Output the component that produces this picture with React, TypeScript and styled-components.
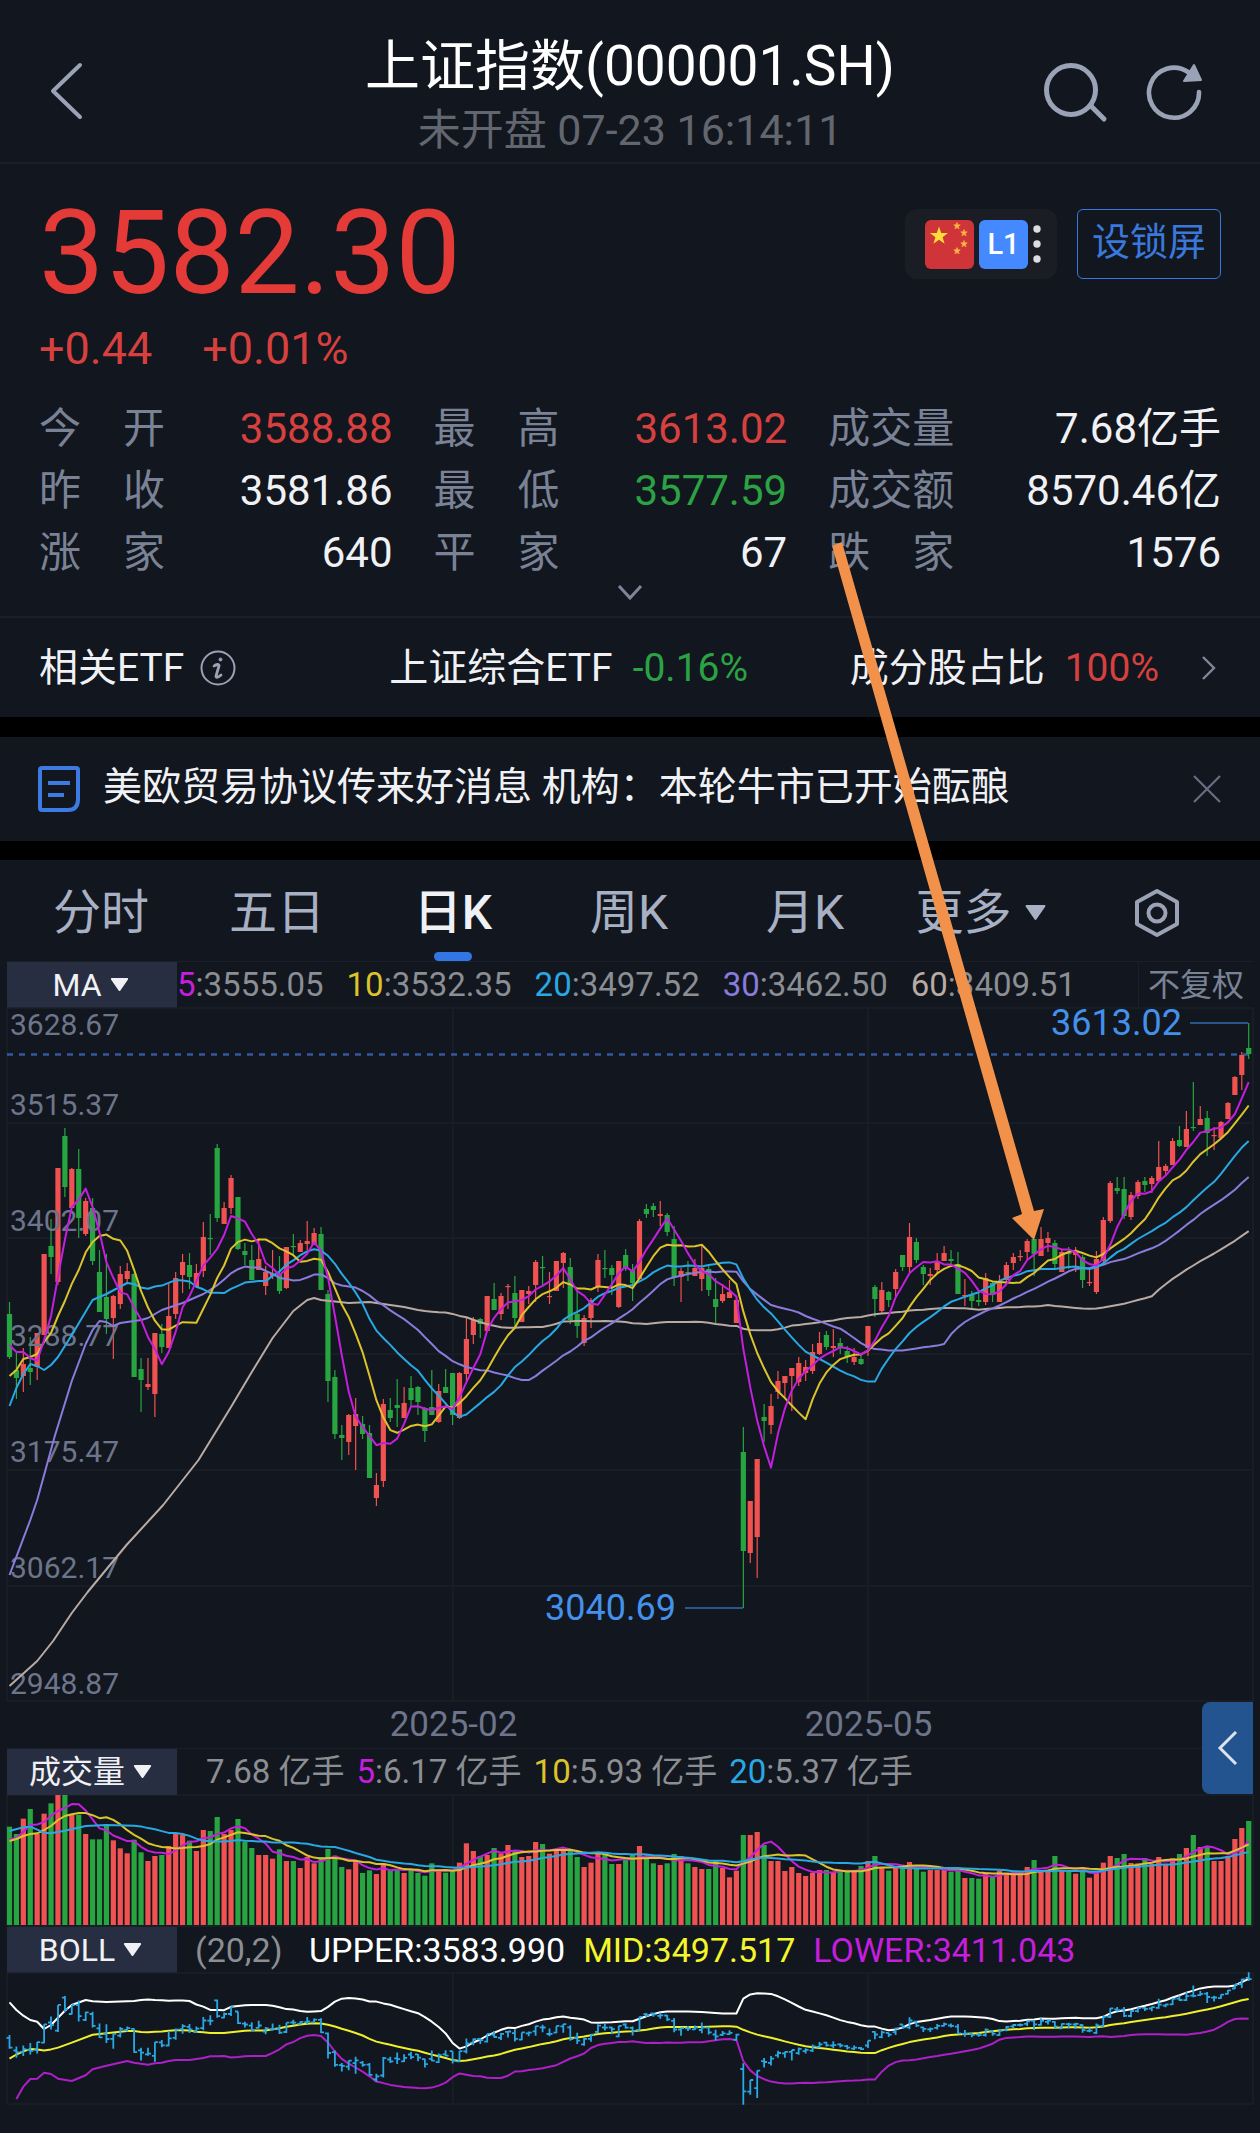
import React from "react";
import styled, { createGlobalStyle } from "styled-components";

const color = {
  bg: "#12161e",
  line: "#1a1f29",
  text: "#f0f1f5",
  label: "#7a8296",
  muted: "#62666f",
  axis: "#6d758b",
  value: "#8b8e93",
  tab: "#a8b0c4",
  icon: "#9aa2b6",
  red: "#e43a38",
  softRed: "#d6403f",
  green: "#2ba344",
  up: "#ef5250",
  down: "#27a541",
  blue: "#3a78dc",
  ma5: "#c31fdc",
  ma10: "#dcc32c",
  ma20: "#28a8e4",
  ma30: "#8a7bdc",
  ma60: "#b9aaa4",
};

/* ---------- chart data ---------- */

// One session per entry: direction, then high, body top, body bottom, low.
const SESSIONS = `
g302,314,357,359 g353,370,378,399 r348,364,376,392 g337,368,372,385 r333,333,367,380 r254,254,335,335
g219,246,257,274 r168,168,282,285 g128,136,187,197 r168,169,208,208 g149,169,218,238 r198,201,234,236
g198,208,261,265 g250,272,312,312 g254,297,319,334 r295,296,318,359 r266,274,304,309 r263,271,279,283
g273,274,377,377 g358,369,380,412 r358,384,387,390 r333,333,394,417 g324,334,347,353 r284,316,348,348
r272,278,314,319 r254,262,275,293 g253,265,277,289 r264,273,287,288 r222,237,271,277 g214,238,239,255
g144,148,218,222 r202,208,224,224 r175,178,208,214 g197,197,249,250 g243,251,255,265 g245,260,280,280
r238,259,270,270 r266,272,286,295 r250,274,276,279 g256,274,291,294 r247,247,288,289 g234,246,247,255
r240,243,252,252 r221,241,244,250 r228,233,245,245 g227,234,290,290 g290,294,381,402 g370,377,434,439
g425,435,438,460 r414,415,442,455 r398,414,426,470 g416,424,434,439 g425,433,478,478 r473,485,498,506
r399,404,481,487 g398,410,418,422 g379,405,408,427 r387,403,418,418 g376,388,400,406 g386,387,402,415
g407,408,431,442 g370,407,415,415 r384,391,422,423 g369,387,393,393 g373,373,415,425 r372,373,418,419
r317,339,374,381 r317,320,335,344 g318,319,324,338 r296,296,331,331 g283,299,310,310 r293,296,314,320
r284,286,287,309 g276,293,318,327 r290,290,322,322 r286,291,294,304 r260,262,285,302 g256,267,268,286
r272,296,297,304 r261,261,291,291 r252,253,263,288 g258,267,320,324 g291,314,326,338 r315,318,343,346
r298,300,318,328 r254,260,287,292 g250,268,269,278 g265,268,275,295 r261,261,307,308 g249,255,269,271
g264,270,283,301 r219,221,279,279 g204,209,214,218 g203,206,210,217 r201,214,216,226 g213,215,232,236
g226,239,277,286 r268,271,277,302 g261,272,273,281 r259,268,276,276 r246,268,279,291 g266,269,290,296
g278,299,307,323 r284,294,301,303 r280,292,298,298 r296,300,323,323 g427,452,551,608 r501,501,553,563
r459,459,537,578 g404,417,421,442 r394,406,425,434 r371,381,392,399 r376,376,383,399 r368,368,376,411
r357,363,382,386 r360,367,373,381 r344,352,371,374 r332,343,354,355 g331,335,347,350 r329,346,348,357
g338,343,348,354 g346,351,357,363 r348,357,362,365 g355,359,364,365 r326,326,348,356 g285,287,299,317
r282,290,311,313 g291,292,300,307 r269,272,289,298 g255,255,267,271 r223,237,267,273 g238,242,260,263
g265,267,274,285 r268,274,276,285 r253,261,270,274 r246,253,261,261 g250,259,261,265 g252,264,294,294
r279,295,296,306 g291,295,301,308 g291,300,302,306 r273,278,302,305 g281,283,295,302 r275,281,302,302
r262,265,280,282 r253,257,263,270 r250,256,257,261 r239,241,252,259 g239,239,254,276 r227,239,256,256
r232,238,243,252 g240,243,264,270 r250,252,272,272 g247,253,254,269 r247,252,255,272 g255,257,280,288
r268,282,283,286 r251,259,292,294 r217,220,261,263 r181,183,221,223 g177,188,191,194 g177,189,216,219
r192,195,217,220 r180,182,196,199 g177,181,185,192 r176,178,184,193 r141,167,181,182 r164,166,171,175
r138,141,165,165 g126,140,146,147 r111,129,147,147 g82,127,128,131 r106,119,125,125 g111,118,133,156
r127,135,136,150 r121,122,138,138 r102,103,119,119 r76,77,95,95 r52,55,75,90 g23,48,54,59
`;

interface Session {
  up: boolean;
  high: number;
  top: number;
  bottom: number;
  low: number;
  open: number;
  close: number;
}

const sessions: Session[] = SESSIONS.trim()
  .split(/\s+/)
  .map((entry) => {
    const up = entry[0] === "r";
    const [high, top, bottom, low] = entry.slice(1).split(",").map(Number);
    return { up, high, top, bottom, low, open: up ? bottom : top, close: up ? top : bottom };
  });

// Volume of each session, in thirds of a chart unit below the panel's ceiling.
const VOLUMES = [
  320, 342, 296, 267, 342, 281, 250, 225, 222, 284, 284, 342, 358, 358, 313, 361, 385, 400, 359, 397,
  423, 408, 405, 378, 342, 345, 362, 393, 330, 333, 291, 342, 330, 297, 365, 384, 405, 405, 416, 388,
  423, 423, 444, 411, 430, 411, 387, 407, 441, 448, 423, 459, 451, 462, 430, 452, 448, 459, 450, 459,
  467, 430, 450, 458, 450, 428, 370, 393, 408, 405, 384, 400, 375, 393, 411, 408, 366, 372, 401, 390,
  385, 393, 411, 441, 428, 400, 405, 432, 432, 417, 405, 378, 408, 430, 435, 430, 402, 408, 430, 441,
  447, 447, 423, 444, 472, 452, 345, 345, 336, 375, 423, 423, 453, 441, 459, 468, 459, 450, 450, 458,
  453, 450, 452, 438, 423, 408, 441, 452, 441, 441, 426, 441, 455, 450, 450, 445, 455, 452, 474, 474,
  476, 458, 468, 452, 458, 460, 455, 441, 420, 450, 450, 408, 452, 455, 461, 450, 473, 455, 428, 408,
  414, 402, 429, 430, 414, 432, 411, 434, 415, 402, 384, 345, 381, 381, 423, 423, 408, 357, 324, 303,
].map((v) => (v - 222) / 3);

type Knot = [number, number];

const xAt = (i: number) => 9.5 + i * 6.923;

const average = (values: number[]) => values.reduce((a, b) => a + b, 0) / values.length;

const trailing = (values: number[], i: number, period: number) => values.slice(i - period + 1, i + 1);

// The window has no history before its first session, so each average opens
// with known knots and is computed from the first full period onwards.
function series(values: number[], period: number, head: Knot[], fn = average): Knot[] {
  const tail: Knot[] = [];
  for (let i = period - 1; i < values.length; i++) tail.push([i, fn(trailing(values, i, period))]);
  return [...head, ...tail];
}

const toPoints = (knots: Knot[], scale: (y: number) => number = (y) => y) =>
  knots.map(([i, y]) => `${xAt(i).toFixed(1)},${scale(y).toFixed(1)}`).join(" ");

const closes = sessions.map((s) => s.close);

const ma5 = series(closes, 5, [[0, 345], [1, 352], [2, 352], [3, 358]]);
const ma10 = series(closes, 10, [
  [0, 376], [1, 370], [2, 359], [3, 357], [4, 354], [5, 342], [6, 333], [7, 316], [8, 301],
]);
const ma20 = series(closes, 20, [
  [0, 406], [1, 388], [2, 374], [3, 364], [4, 366], [5, 370], [6, 365], [7, 357], [9, 335], [12, 300],
  [14, 294], [17, 283], [18, 284],
]);
const ma30 = series(closes, 30, [
  [0, 575], [3, 520], [4, 500], [5, 475], [6.5, 437], [9, 381], [11, 344], [12, 330], [13, 321], [14, 322],
  [15, 326], [16, 323], [19, 320], [20, 318], [22, 310], [25, 303], [28, 294],
]);
const ma60 = series(closes, 60, [
  [0, 686], [4, 661], [6.3, 641], [9, 613], [11.3, 592], [16.9, 545], [22.2, 505], [27.3, 460], [32, 407],
  [35, 372], [38, 338], [41, 311], [43, 300], [44, 298], [45, 300], [49, 303], [52, 302], [54, 304], [57, 307],
]);

const third = (knots: Knot[]): Knot[] => knots.map(([i, v]) => [i, (v - 222) / 3]);
const vol5 = series(VOLUMES, 5, third([[0, 357], [1, 355], [2, 335], [3, 315]]));
const vol10 = series(VOLUMES, 10, third([
  [0, 363], [1, 357], [2, 348], [3, 342], [4, 340], [5, 330], [6, 318], [7, 300], [8, 288],
]));
const vol20 = series(VOLUMES, 20, third([
  [0, 333], [2, 322], [3, 320], [5, 338], [6, 340], [8, 332], [11, 318], [14, 315], [18, 317],
]));

// Bollinger panel: the same prices on a flatter scale.
const bollY = (y: number) => 27 + (y - 141.7) * 0.2255;
const deviation = (values: number[]) => {
  const m = average(values);
  return Math.sqrt(average(values.map((v) => (v - m) ** 2)));
};
const panel = (knots: Knot[]): Knot[] => knots.map(([i, v]) => [i, v / 3 - 252]);
const upperBand = [
  ...panel([
    [0, 847], [1, 870], [2, 887], [3, 900], [4, 905], [5, 927], [6, 915], [7, 893], [8, 872], [9, 855],
    [11, 840], [12, 844], [14, 846], [18, 843],
  ]),
  ...series(closes, 20, [], (w) => bollY(average(w) - 2 * deviation(w))),
];
const lowerBand = [
  ...panel([
    [1, 1137], [2, 1100], [3, 1077], [4, 1076], [5, 1058], [6, 1062], [7, 1076], [9, 1083], [11, 1066],
    [12, 1048], [14, 1037], [17, 1023], [18, 1028],
  ]),
  ...series(closes, 20, [], (w) => bollY(average(w) + 2 * deviation(w))),
];

/* ---------- page frame ---------- */

const GlobalStyle = createGlobalStyle`
  *, *::before, *::after { box-sizing: border-box; }
  body {
    margin: 0;
    background: ${color.bg};
    color: ${color.text};
    font-family: Roboto, "Noto Sans CJK SC", sans-serif;
  }
  h1, p, dl, dt, dd { margin: 0; font-weight: 400; }
  button, select {
    font: inherit;
    color: inherit;
    background: none;
    border: 0;
    padding: 0;
    cursor: pointer;
  }
  a { color: inherit; text-decoration: none; }
  svg { display: block; }
`;

const Page = styled.main`
  position: relative;
  min-height: 100vh;
  background: ${color.bg};
`;

const Header = styled.header`
  display: grid;
  grid-template-columns: 1fr auto 1fr;
  align-items: center;
  height: 164px;
  padding: 24px 44px 0;
  border-bottom: 2px solid ${color.line};
`;

const HeaderTitles = styled.div`
  display: flex;
  flex-direction: column;
  align-items: center;
  padding-top: 10px;
`;

const Title = styled.h1`
  font-size: 55px;
  line-height: 64px;
  color: #fff;
`;

const Subtitle = styled.p`
  font-size: 43px;
  line-height: 64px;
  color: ${color.muted};
`;

const HeaderActions = styled.div`
  display: flex;
  justify-content: flex-end;
  gap: 36px;
  padding-right: 12px;
`;

const IconButton = styled.button`
  display: inline-flex;
  align-items: center;
  justify-content: center;
`;

const Quote = styled.section`
  padding: 45px 39px 0;
  border-bottom: 2px solid ${color.line};
`;

const QuoteTop = styled.div`
  display: flex;
  justify-content: space-between;
  align-items: flex-start;
`;

const Price = styled.p`
  font-size: 116px;
  line-height: 88px;
  color: ${color.red};
`;

const QuoteTools = styled.div`
  display: flex;
  align-items: center;
  gap: 20px;
`;

const MarketBadge = styled.button`
  display: flex;
  align-items: center;
  gap: 5px;
  height: 70px;
  padding: 0 16px 0 20px;
  border-radius: 12px;
  background: #1a1d24;
`;

const LevelTag = styled.span`
  width: 49px;
  height: 49px;
  border-radius: 6px;
  background: #4489ff;
  color: #fff;
  font-size: 29px;
  font-weight: 500;
  line-height: 49px;
  text-align: center;
`;

const LockButton = styled.button`
  height: 70px;
  padding: 0 14px 4px;
  border: 1px solid ${color.blue};
  border-radius: 6px;
  color: ${color.blue};
  font-size: 38px;
  line-height: 56px;
`;

const Change = styled.p`
  display: flex;
  gap: 50px;
  padding-top: 27px;
  font-size: 45px;
  line-height: 50px;
  color: ${color.softRed};
`;

const Stats = styled.dl`
  display: grid;
  grid-template-columns: 9fr 9fr 10fr;
  column-gap: 41px;
  padding-top: 24px;
`;

const Stat = styled.div`
  display: flex;
  justify-content: space-between;
  font-size: 42px;
  line-height: 62px;
`;

const StatName = styled.dt`
  display: flex;
  justify-content: space-between;
  width: 3em;
  color: ${color.label};
`;

const StatValue = styled.dd<{ $tone?: string }>`
  color: ${(p) => p.$tone ?? color.text};
`;

const Expand = styled(IconButton)`
  align-items: flex-start;
  width: 100%;
  height: 32px;
`;

const EtfRow = styled.section`
  display: grid;
  grid-template-columns: 350fr 460fr 369fr;
  align-items: center;
  height: 99px;
  padding: 0 41px 0 39px;
  font-size: 39px;
  line-height: 56px;
`;

const EtfCell = styled.a<{ $gap?: number }>`
  display: flex;
  align-items: center;
  gap: ${(p) => p.$gap ?? 20}px;
  white-space: nowrap;
`;

const Toned = styled.span<{ $tone: string }>`
  color: ${(p) => p.$tone};
`;

const PushRight = styled.span`
  margin-left: auto;
`;

const News = styled.section`
  display: flex;
  align-items: center;
  gap: 23px;
  height: 143px;
  padding: 0 39px 0 38px;
  border: solid #000;
  border-width: 20px 0 19px;
  font-size: 39px;
  line-height: 56px;
`;

const NewsLink = styled.a`
  flex: 1;
  padding-bottom: 4px;
  white-space: nowrap;
`;

/* ---------- chart frame ---------- */

const Tabs = styled.nav`
  display: grid;
  grid-template-columns: repeat(7, 1fr);
  height: 101px;
  padding: 0 15px 0 13px;
`;

const Tab = styled.button<{ $active?: boolean }>`
  display: flex;
  align-items: center;
  justify-content: center;
  gap: 12px;
  padding-top: 4px;
  font-size: 48px;
  line-height: 64px;
  font-weight: ${(p) => (p.$active ? 500 : 400)};
  color: ${(p) => (p.$active ? color.text : color.tab)};
  position: relative;

  &::after {
    content: "";
    display: ${(p) => (p.$active ? "block" : "none")};
    position: absolute;
    left: 50%;
    bottom: 0;
    width: 38px;
    height: 9px;
    margin-left: -19px;
    border-radius: 5px;
    background: #3276e4;
  }
`;

const IndicatorBar = styled.div<{ $gap: number; $indent: number; $size: number }>`
  display: flex;
  align-items: center;
  gap: ${(p) => p.$gap}px;
  height: 46px;
  margin: 0 7px;
  border-top: 1px solid ${color.line};
  font-size: ${(p) => p.$size}px;
  line-height: 46px;
  color: ${color.value};
  white-space: nowrap;

  & > :nth-child(2) {
    margin-left: ${(p) => p.$indent}px;
  }
`;

const Picker = styled.label<{ $gap: number }>`
  display: flex;
  align-items: center;
  justify-content: center;
  gap: 8px;
  width: 170px;
  height: 46px;
  padding-right: 3px;
  margin-right: -${(p) => p.$gap}px;
  background: #282e41;
  color: ${color.text};
`;

const PickerSelect = styled.select`
  appearance: none;
  field-sizing: content;
  height: 46px;
  font-size: 32px;
  line-height: 46px;
  outline: 0;
`;

const Adjust = styled.button`
  margin-left: auto;
  padding: 0 9px;
  height: 46px;
  border-left: 1px solid ${color.line};
  color: ${color.label};
  font-size: 32px;
  line-height: 44px;
`;

const Chart = styled.svg`
  width: 100%;
  height: auto;
  overflow: visible;
  font-family: Roboto, sans-serif;
`;

const AxisAndVolume = styled.div`
  position: relative;
`;

const DateAxis = styled.div`
  display: grid;
  grid-template-columns: 246fr 415fr 415fr 184fr;
  height: 46px;
  font-size: 35px;
  line-height: 46px;
  color: ${color.axis};
  text-align: center;

  & > :first-child {
    grid-column: 2;
  }
`;

const Drawer = styled(IconButton)`
  position: absolute;
  top: 0;
  right: 7px;
  width: 51px;
  height: 92px;
  border-radius: 8px 0 0 8px;
  background: #23548f;
`;

const Annotation = styled.svg`
  position: absolute;
  inset: 0;
  width: 100%;
  height: 100%;
  pointer-events: none;
`;

/* ---------- small drawings ---------- */

const Triangle = ({ w, h }: { w: number; h: number }) => (
  <svg width={w} height={h} viewBox="0 0 22 16" aria-hidden="true">
    <path d="M2 1H20L11 14Z" fill="currentColor" stroke="currentColor" strokeWidth="2" strokeLinejoin="round" />
  </svg>
);

const BackIcon = () => (
  <svg width="44" height="60" viewBox="0 0 44 60" fill="none" aria-hidden="true">
    <path d="M36 4 9 30 36 56" stroke={color.icon} strokeWidth="4" strokeLinecap="round" strokeLinejoin="round" />
  </svg>
);

const SearchIcon = () => (
  <svg width="66" height="66" viewBox="0 0 66 66" fill="none" stroke={color.icon} strokeWidth="5" aria-hidden="true">
    <circle cx="29" cy="30" r="24.5" />
    <path d="m49 46 13 13" strokeLinecap="round" />
  </svg>
);

const RefreshIcon = () => (
  <svg width="60" height="66" viewBox="0 0 60 66" fill="none" aria-hidden="true">
    <path d="M55 32A25 25 0 1 1 44 12" stroke={color.icon} strokeWidth="4.6" strokeLinecap="round" />
    <path d="M50 5 57 20 40 21Z" fill={color.icon} stroke={color.icon} strokeWidth="2" strokeLinejoin="round" />
  </svg>
);

const star = (cx: number, cy: number, r: number) =>
  Array.from({ length: 10 }, (_, k) => {
    const a = (Math.PI / 5) * k - Math.PI / 2;
    const d = k % 2 ? r * 0.4 : r;
    return `${(cx + d * Math.cos(a)).toFixed(1)},${(cy + d * Math.sin(a)).toFixed(1)}`;
  }).join(" ");

const Flag = () => (
  <svg width="49" height="49" viewBox="0 0 49 49" aria-hidden="true">
    <rect width="49" height="49" rx="6" fill="#ce3438" />
    <polygon points={star(14, 16, 9.5)} fill="#fbdc3a" />
    {[[32, 6], [39, 13], [39, 24], [32, 31]].map(([x, y]) => (
      <polygon key={`${x}-${y}`} points={star(x, y, 3.4)} fill="#fbc04a" stroke="#f5a43c" strokeWidth="1" />
    ))}
  </svg>
);

const Dots = () => (
  <svg width="8" height="40" viewBox="0 0 8 40" fill="#dcdde0" aria-hidden="true">
    <circle cx="4" cy="5" r="3.7" />
    <circle cx="4" cy="20" r="3.7" />
    <circle cx="4" cy="35" r="3.7" />
  </svg>
);

const InfoIcon = () => (
  <svg width="36" height="36" viewBox="0 0 36 36" fill="none" stroke={color.icon} aria-hidden="true">
    <circle cx="18" cy="18" r="16.5" strokeWidth="2" />
    <path d="M14 16C16 14.500 19.500 13.500 19 16L16 26C15.500 28.500 19 27 21 25" strokeWidth="2.800" strokeLinecap="round" />
    <circle cx="20.500" cy="9.500" r="1.500" fill={color.icon} />
  </svg>
);

const NewsIcon = () => (
  <svg width="42" height="46" viewBox="0 0 42 46" fill="none" stroke="#3d7be2" aria-hidden="true">
    <path d="M4 2H38Q40 2 40 4V33Q40 44 30 44H4Q2 44 2 42V4Q2 2 4 2Z" strokeWidth="4" strokeLinejoin="round" />
    <path d="M10 17H32M10 29H26" strokeWidth="4" />
  </svg>
);

const SettingsIcon = () => (
  <svg width="46" height="50" viewBox="0 0 46 50" fill="none" stroke={color.icon} strokeWidth="4" aria-hidden="true">
    <path d="M23 3 43 14V36L23 47 3 36V14Z" strokeLinejoin="round" />
    <circle cx="23" cy="25" r="8.500" />
  </svg>
);

/* ---------- chart panels ---------- */

const Line = ({ points, stroke }: { points: string; stroke: string }) => (
  <polyline points={points} fill="none" stroke={stroke} strokeWidth="2" strokeLinejoin="round" />
);

const Frame = ({ top, bottom }: { top: number; bottom: number }) => (
  <path
    d={`M7 ${top}H1253V${bottom}H7ZM453 ${top}V${bottom}M868 ${top}V${bottom}`}
    fill="none"
    stroke={color.line}
    strokeWidth="1.500"
  />
);

const PRICE_AXIS: [string, number][] = [
  ["3628.67", 35],
  ["3515.37", 115],
  ["3402.07", 231],
  ["3288.77", 346],
  ["3175.47", 462],
  ["3062.17", 578],
  ["2948.87", 694],
];

const CandleChart = () => (
  <Chart viewBox="0 7 1260 695" role="img" aria-label="日K线图">
    <Frame top={8} bottom={701} />
    <path d="M7 123H1253M7 238H1253M7 354H1253M7 470H1253M7 586H1253" stroke={color.line} strokeWidth="1.500" />
    <path d="M7 54.500H1253" stroke="#2f5b9e" strokeWidth="2.600" strokeDasharray="6 6" />
    {sessions.map((s, i) => (
      <g key={i} fill={s.up ? color.up : color.down}>
        <rect x={xAt(i) - 0.6} y={s.high} width="1.200" height={s.low - s.high} />
        <rect x={xAt(i) - 2.6} y={s.top} width="5.200" height={Math.max(1.2, s.bottom - s.top)} />
      </g>
    ))}
    <g fill={color.axis} fontSize="30">
      {PRICE_AXIS.map(([text, y]) => (
        <text key={text} x="10" y={y}>{text}</text>
      ))}
    </g>
    <Line points={toPoints(ma60)} stroke={color.ma60} />
    <Line points={toPoints(ma30)} stroke={color.ma30} />
    <Line points={toPoints(ma20)} stroke={color.ma20} />
    <Line points={toPoints(ma10)} stroke={color.ma10} />
    <Line points={toPoints(ma5)} stroke={color.ma5} />
    <path d="M1190 23H1248M685 608H743" stroke="#2f6cb0" strokeWidth="1.500" />
    <g fill="#4391ea" fontSize="36" textAnchor="end">
      <text x="1182" y="35">3613.02</text>
      <text x="676" y="620">3040.69</text>
    </g>
  </Chart>
);

const VolumeChart = () => (
  <Chart viewBox="0 0 1260 132" role="img" aria-label="成交量图">
    <Frame top={1} bottom={131} />
    {VOLUMES.map((y, i) => (
      <rect
        key={i}
        x={xAt(i) - 2.6}
        y={y}
        width="5.200"
        height={131 - y}
        fill={sessions[i].up ? color.up : color.down}
      />
    ))}
    <Line points={toPoints(vol5)} stroke={color.ma5} />
    <Line points={toPoints(vol10)} stroke={color.ma10} />
    <Line points={toPoints(vol20)} stroke={color.ma20} />
  </Chart>
);

const BollChart = () => (
  <Chart viewBox="0 0 1260 134" role="img" aria-label="BOLL图">
    <Frame top={1} bottom={132} />
    <Line points={toPoints(upperBand)} stroke="#ffffff" />
    <Line points={toPoints(ma20, bollY)} stroke="#eef02a" />
    <Line points={toPoints(lowerBand)} stroke="#ad20c8" />
    <path
      d={sessions
        .map((s, i) => {
          const x = xAt(i);
          const y = (v: number) => bollY(v).toFixed(1);
          return `M${x.toFixed(1)} ${y(s.high)}V${y(s.low + 3)}M${(x - 3).toFixed(1)} ${y(s.open)}h3M${x.toFixed(1)} ${y(s.close)}h3`;
        })
        .join("")}
      fill="none"
      stroke={color.ma20}
      strokeWidth="1.800"
    />
  </Chart>
);

/* ---------- content ---------- */

const STATS: { name: string; value: string; tone?: string }[] = [
  { name: "今开", value: "3588.88", tone: color.softRed },
  { name: "最高", value: "3613.02", tone: color.softRed },
  { name: "成交量", value: "7.68亿手" },
  { name: "昨收", value: "3581.86" },
  { name: "最低", value: "3577.59", tone: color.green },
  { name: "成交额", value: "8570.46亿" },
  { name: "涨家", value: "640" },
  { name: "平家", value: "67" },
  { name: "跌家", value: "1576" },
];

const AVERAGES = [
  { period: "5", value: "3555.05", tone: color.ma5 },
  { period: "10", value: "3532.35", tone: color.ma10 },
  { period: "20", value: "3497.52", tone: color.ma20 },
  { period: "30", value: "3462.50", tone: color.ma30 },
  { period: "60", value: "3409.51", tone: color.ma60 },
];

const VOLUME_AVERAGES = [
  { period: "5", value: "6.17 亿手", tone: color.ma5 },
  { period: "10", value: "5.93 亿手", tone: color.ma10 },
  { period: "20", value: "5.37 亿手", tone: color.ma20 },
];

const IndicatorPicker = ({ name, value, gap }: { name: string; value: string; gap: number }) => (
  <Picker $gap={gap}>
    <PickerSelect aria-label={name} defaultValue={value}>
      <option>{value}</option>
    </PickerSelect>
    <Triangle w={19} h={14} />
  </Picker>
);

export default function App() {
  return (
    <Page>
      <GlobalStyle />
      <Header>
        <div>
          <IconButton aria-label="返回"><BackIcon /></IconButton>
        </div>
        <HeaderTitles>
          <Title>上证指数(000001.SH)</Title>
          <Subtitle>未开盘 07-23 16:14:11</Subtitle>
        </HeaderTitles>
        <HeaderActions>
          <IconButton aria-label="搜索"><SearchIcon /></IconButton>
          <IconButton aria-label="刷新"><RefreshIcon /></IconButton>
        </HeaderActions>
      </Header>

      <Quote>
        <QuoteTop>
          <Price>3582.30</Price>
          <QuoteTools>
            <MarketBadge aria-label="行情等级">
              <Flag />
              <LevelTag>L1</LevelTag>
              <Dots />
            </MarketBadge>
            <LockButton>设锁屏</LockButton>
          </QuoteTools>
        </QuoteTop>
        <Change>
          <span>+0.44</span>
          <span>+0.01%</span>
        </Change>
        <Stats>
          {STATS.map((s) => (
            <Stat key={s.name}>
              <StatName>
                {[...s.name].map((ch) => (
                  <span key={ch}>{ch}</span>
                ))}
              </StatName>
              <StatValue $tone={s.tone}>{s.value}</StatValue>
            </Stat>
          ))}
        </Stats>
        <Expand aria-label="展开">
          <svg width="26" height="16" viewBox="0 0 26 16" fill="none" aria-hidden="true">
            <path d="M2 2 13 14 24 2" stroke="#7f8699" strokeWidth="3" />
          </svg>
        </Expand>
      </Quote>

      <EtfRow>
        <EtfCell href="#etf" $gap={16}>
          相关ETF
          <InfoIcon />
        </EtfCell>
        <EtfCell href="#composite">
          上证综合ETF
          <Toned $tone={color.green}>-0.16%</Toned>
        </EtfCell>
        <EtfCell href="#components">
          成分股占比
          <Toned $tone={color.softRed}>100%</Toned>
          <PushRight>
            <svg width="20" height="28" viewBox="0 0 20 28" fill="none" aria-hidden="true">
              <path d="M4 3 15 14 4 25" stroke="#7f8699" strokeWidth="2.400" />
            </svg>
          </PushRight>
        </EtfCell>
      </EtfRow>

      <News>
        <NewsIcon />
        <NewsLink href="#news">美欧贸易协议传来好消息 机构：本轮牛市已开始酝酿</NewsLink>
        <IconButton aria-label="关闭">
          <svg width="28" height="28" viewBox="0 0 28 28" fill="none" aria-hidden="true">
            <path d="M1 1 27 27M27 1 1 27" stroke="#676e84" strokeWidth="2.200" />
          </svg>
        </IconButton>
      </News>

      <Tabs aria-label="周期">
        <Tab>分时</Tab>
        <Tab>五日</Tab>
        <Tab $active aria-current="true">日K</Tab>
        <Tab>周K</Tab>
        <Tab>月K</Tab>
        <Tab aria-haspopup="menu">
          更多
          <Triangle w={23} h={16} />
        </Tab>
        <Tab aria-label="设置"><SettingsIcon /></Tab>
      </Tabs>

      <IndicatorBar $gap={23} $indent={0} $size={33}>
        <IndicatorPicker name="主图指标" value="MA" gap={23} />
        {AVERAGES.map((a) => (
          <span key={a.period}>
            <Toned $tone={a.tone}>{a.period}</Toned>:{a.value}
          </span>
        ))}
        <Adjust>不复权</Adjust>
      </IndicatorBar>
      <CandleChart />

      <AxisAndVolume>
        <DateAxis>
          <span>2025-02</span>
          <span>2025-05</span>
        </DateAxis>
        <IndicatorBar $gap={12} $indent={29} $size={33}>
          <IndicatorPicker name="副图指标一" value="成交量" gap={12} />
          <span>7.68 亿手</span>
          {VOLUME_AVERAGES.map((a) => (
            <span key={a.period}>
              <Toned $tone={a.tone}>{a.period}</Toned>:{a.value}
            </span>
          ))}
        </IndicatorBar>
        <Drawer aria-label="展开侧栏">
          <svg width="22" height="36" viewBox="0 0 22 36" fill="none" aria-hidden="true">
            <path d="M19 2 3 18 19 34" stroke="#dde3ee" strokeWidth="3" />
          </svg>
        </Drawer>
      </AxisAndVolume>
      <VolumeChart />

      <IndicatorBar $gap={18} $indent={18} $size={34}>
        <IndicatorPicker name="副图指标二" value="BOLL" gap={18} />
        <span>(20,2)&nbsp;</span>
        <Toned $tone="#ffffff">UPPER:3583.990</Toned>
        <Toned $tone="#f4f62c">MID:3497.517</Toned>
        <Toned $tone={color.ma5}>LOWER:3411.043</Toned>
      </IndicatorBar>
      <BollChart />

      <Annotation viewBox="0 0 1260 2133" preserveAspectRatio="none" aria-hidden="true">
        <path d="M832 546 842 542 1034 1211 1044 1209 1034 1240 1012 1218 1022 1214Z" fill="#f2924a" />
      </Annotation>
    </Page>
  );
}
